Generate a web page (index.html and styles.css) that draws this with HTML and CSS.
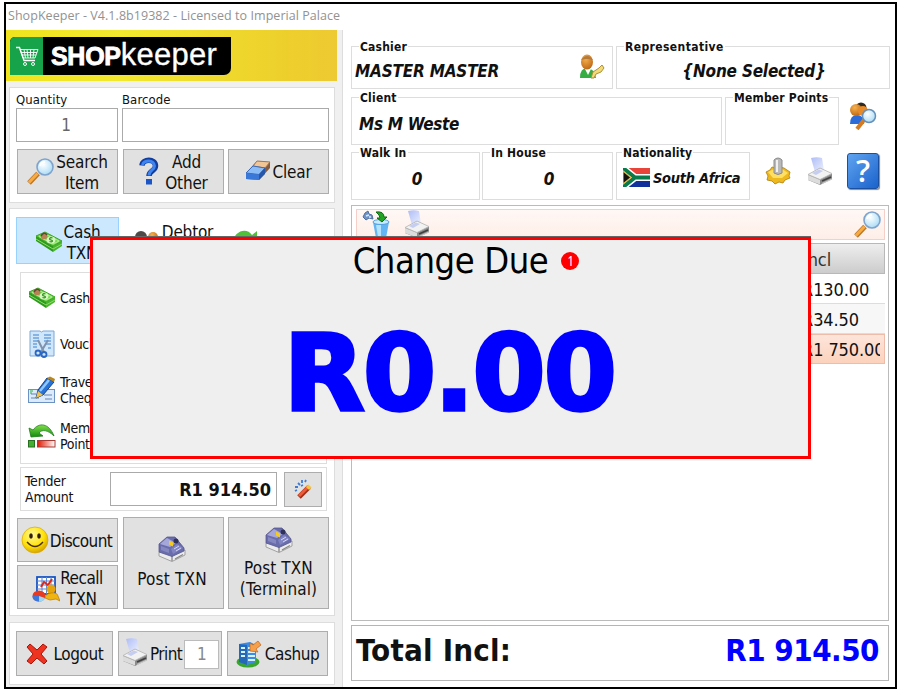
FILE: index.html
```html
<!DOCTYPE html>
<html lang="en">
<head>
  <meta charset="UTF-8">
  <title>ShopKeeper</title>
  <link rel="stylesheet" href="styles.css">
</head>
<body>

  <!-- shared icons -->
  <svg class="defs" width="0" height="0">
    <defs>
      <linearGradient id="gPaper" x1="0" y1="0" x2="1" y2="1"><stop offset="0" stop-color="#aebcf5"/><stop offset="1" stop-color="#eef2ff"/></linearGradient>
      <linearGradient id="gGreen" x1="0" y1="0" x2="0" y2="1"><stop offset="0" stop-color="#7fe04a"/><stop offset="1" stop-color="#138a10"/></linearGradient>
      <linearGradient id="gRed" x1="0" y1="0" x2="1" y2="0"><stop offset="0" stop-color="#e01800"/><stop offset="1" stop-color="#fff"/></linearGradient>
      <radialGradient id="gLens" cx=".4" cy=".35" r=".7"><stop offset="0" stop-color="#fff"/><stop offset="1" stop-color="#a5daf6"/></radialGradient>
      <radialGradient id="gHead" cx=".4" cy=".3" r=".8"><stop offset="0" stop-color="#f6b04c"/><stop offset="1" stop-color="#b8600e"/></radialGradient>
      <radialGradient id="gSmile" cx=".4" cy=".3" r=".75"><stop offset="0" stop-color="#fffa9a"/><stop offset=".6" stop-color="#ffe208"/><stop offset="1" stop-color="#d09a00"/></radialGradient>
    </defs>
    <symbol id="lens" viewBox="0 0 28 28">
      <path d="M2 26 11 16.500" stroke="#b8762c" stroke-width="5"/>
      <path d="M2 25.500 10.500 16.500" stroke="#f9ab42" stroke-width="3"/>
      <circle cx="18" cy="10" r="8" fill="url(#gLens)" stroke="#7fa3cc" stroke-width="1.600"/>
      <path d="M13 9a5 5 0 0 1 5-4" fill="none" stroke="#fff" stroke-width="2"/>
    </symbol>
    <symbol id="money" viewBox="0 0 28 22">
      <path d="M1 5 18 15v6L1 10Z" fill="#2c9a1c"/>
      <path d="M18 15 27 10v5l-9 6Z" fill="#49b52e"/>
      <path d="M1 8 18 18M18 18 27 13" stroke="#8fdc6a"/>
      <path d="M1 5 10 1 27 10 18 15Z" fill="#6bd346" stroke="#3ba527"/>
      <path d="M4 5.500 10 3 24 10 18 13Z" fill="none" stroke="#b5ef96"/>
      <ellipse cx="16" cy="9" rx="4.500" ry="3.500" fill="#d5f7bd"/>
      <path d="M17.500 7c-3-1-4 1.500-1.500 2s1.500 2.500-1.500 1.500" fill="none" stroke="#2d9020" stroke-width="1.200"/>
      <circle cx="9" cy="5" r="3.300" fill="#b98253"/>
      <path d="M6 5q3-5 6-1" stroke="#5b4a36" stroke-width="1.600" fill="none"/>
    </symbol>
    <symbol id="printer" viewBox="0 0 26 28">
      <path d="M4 1q6-1.500 11 0l2 13-9 1Z" fill="url(#gPaper)"/>
      <path d="M1 18 13 11 25 17v5l-12 6L1 23Z" fill="#8b8b8b"/>
      <path d="M1 17.500 13 11 25 16.500 13 22.500Z" fill="#f2f2f2" stroke="#b5b5b5" stroke-width=".8"/>
      <path d="M1 18v5l12 4.500V23Z" fill="#dcdcdc"/>
      <path d="M5 16 12 12.500 16 14 9 18Z" fill="#c5cdf0"/>
      <path d="M15 24 24 20" stroke="#404040" stroke-width="1.600"/>
      <path d="M15 26.500 25 22" stroke="#c8c8c8" stroke-width="1.200"/>
    </symbol>
    <symbol id="register" viewBox="0 0 28 26">
      <path d="M1 16v4l13 5.500L27 19v-5Z" fill="#ececec" stroke="#a0a0a0"/>
      <path d="M14 20v5M17 23l8-4.500" stroke="#888" stroke-width="1.300"/>
      <path d="M1 8 9 1 17 1 26 12 26 15 14 20.500 1 16Z" fill="#6a6dac" stroke="#55578d" stroke-width=".8"/>
      <path d="M2 8 9 2 18 7 12 11Z" fill="#a5a7da"/>
      <path d="M3 10 11 13 11 17 3 14Z" fill="#8588c0"/>
      <path d="M13 13 19 8 25 12 15 18Z" fill="#8184c2"/>
      <path d="M11 4.500 15 6.500 15 10.500 11 8.500Z" fill="#f6cc18"/>
      <circle cx="18" cy="5" r="2.500" fill="#2f3158"/>
      <path d="M16 13l5-3M18 15l5-3" stroke="#d5d6f2"/>
    </symbol>
  </svg>

  <div class="window">
    <div class="titlebar">ShopKeeper - V4.1.8b19382 - Licensed to Imperial Palace</div>

    <div class="main">
      <div class="left">
        <div class="banner">
          <div class="logo">
            <div class="logo-cart">
              <svg width="24" height="24" viewBox="0 0 24 24" fill="none" stroke="#fff">
                <path d="M1 2.500H4.500L9 15.500H20" stroke-width="1.400"/>
                <path d="M5 4.500H23L20 13H8ZM6 7.500H22M7 10H21M9 4.500l1.500 8.500M12 4.500l1 8.500M15.500 4.500V13M19 4.500l-1 8.500" stroke-width=".9"/>
                <circle cx="10" cy="19" r="1.500"/><circle cx="18" cy="19" r="1.500"/>
              </svg>
            </div>
            <div class="logo-text"><b>SHOP</b><span>keeper</span></div>
          </div>
        </div>

        <div class="panel entry">
          <div class="labels"><span>Quantity</span><span>Barcode</span></div>
          <div class="inputs"><div class="input">1</div><div class="input"></div></div>
          <div class="buttons">
            <div class="btn"><svg width="28" height="28"><use href="#lens"/></svg><span>Search<br>Item</span></div>
            <div class="btn add">
              <svg width="22" height="28" viewBox="0 0 22 28"><path d="M4 8.500C4.500 1.500 17.500 1.500 17.500 9 17.500 14 11 13.500 11 19" fill="none" stroke="#123d9c" stroke-width="5.500"/><path d="M4.500 8C5.500 2.500 16.500 2.500 16.500 9 16.500 13 11 13 11 18.500" fill="none" stroke="#3f85f2" stroke-width="3"/><rect x="8" y="22" width="6" height="5.500" fill="#1b55c8"/></svg>
              <span>Add<br>Other</span>
            </div>
            <div class="btn">
              <svg width="26" height="22" viewBox="0 0 26 22"><path d="M1 13 12 1 25 2v6L14 20 1 19Z" fill="#845b43"/><path d="M8 6 12 1 25 2 20 8Z" fill="#f2c596" stroke="#a57752"/><path d="M1 13 8 6 20 8 14 14.500Z" fill="#8cbcf5" stroke="#3d6bb8"/><path d="M1 13 14 14.500V20L1 19Z" fill="#3978d8"/><path d="M14 14.500 20 8v6l-6 6Z" fill="#2457ab"/></svg>
              <span>Clear</span>
            </div>
          </div>
        </div>

        <div class="panel payment">
          <div class="tabs">
            <div class="tab active"><svg width="28" height="22"><use href="#money"/></svg><span>Cash<br>TXN</span></div>
            <div class="tab debtor">
              <svg width="26" height="24" viewBox="0 0 26 24"><circle cx="7" cy="7" r="6" fill="#4f4a48"/><path d="M3 9q5-4 9 0-1 5-5 5T3 9" fill="#c8772c"/><circle cx="19" cy="7" r="5" fill="url(#gHead)"/><path d="M0 22q1-9 7-9t6 9M13 22q1-9 6-9t7 9" fill="#3f78cc"/></svg>
              <span>Debtor<br>TXN</span>
            </div>
            <div class="tab refund"><svg width="28" height="26" viewBox="0 0 28 26"><path d="M1 15C3 1 16-2 21 6L26 2V16H13L18 11C14 6 8 7 6 15Z" fill="#4fc03a"/></svg><span class="tick">.</span></div>
          </div>

          <div class="methods">
            <div class="method"><svg width="28" height="22"><use href="#money"/></svg><span>Cash</span></div>
            <div class="method">
              <svg width="28" height="28" viewBox="0 0 28 28"><path d="M2 1H12L13.500 2 15 1H26V26H2Z" fill="#cfe6fb" stroke="#7ba5d6"/><path d="M5 5h6M5 8h6M5 11h6M5 14h4M5 17h4M16 5h7M16 8h7M16 11h7M18 14h5M20 18h3" stroke="#6fa3e0" stroke-width="1.300"/><path d="M10 10 16 22M20 10 13 22" stroke="#8093ad" stroke-width="2"/><circle cx="10" cy="23" r="2.500" fill="none" stroke="#2a68c4" stroke-width="1.800"/><circle cx="16" cy="24.500" r="2.500" fill="none" stroke="#2a68c4" stroke-width="1.800"/></svg>
              <span>Voucher</span>
            </div>
            <div class="method">
              <svg width="28" height="28" viewBox="0 0 28 28"><rect x=".5" y="13.500" width="26" height="13" fill="#dcebfb" stroke="#6b92c2"/><path d="M3 18h5M3 22h8M16 19h8M17 23h7" stroke="#8aa8cc" stroke-width="1.300"/><path d="M2 15h3M2 17h2" stroke="#2fae40"/><path d="M8 22 10 14 19 2 26 6 15 19Z" fill="#2873d8" stroke="#1c427a"/><path d="M12 15 21 4" stroke="#8fc8ff" stroke-width="2.500"/><path d="M8 22 10 15 15 19Z" fill="#f1c34c"/><path d="M19 2 22 .500 27 3 26 6Z" fill="#b88720"/></svg>
              <span>Travellers<br>Cheque</span>
            </div>
            <div class="method">
              <svg width="28" height="26" viewBox="0 0 28 26"><path d="M3 14 1 5 5 7C11-1 21 0 26 13 20 7 14 6 11 10L15 13Z" fill="url(#gGreen)" stroke="#1c7a15" stroke-width=".8"/><rect x=".5" y="17.500" width="6" height="6.500" fill="#44ae31" stroke="#276f20"/><rect x="9.500" y="17.500" width="17.500" height="6.500" fill="url(#gRed)" stroke="#a83a34"/></svg>
              <span>Member<br>Points</span>
            </div>
          </div>

          <div class="tender">
            <span class="tender-label">Tender<br>Amount</span>
            <div class="tender-value">R1 914.50</div>
            <div class="btn wand"><svg width="18" height="20" viewBox="0 0 18 20"><path d="M5 18 15 8" stroke="#9c2f18" stroke-width="5"/><path d="M5 17 14 8" stroke="#f05a38" stroke-width="3"/><path d="M13.500 9.500 16 7" stroke="#f4c43c" stroke-width="4.500"/><path d="M1 12l2-1M1 8l3 0M4 4l2 2M8 1l0 3M11 3l1-2M7 7l2-1" stroke="#3c7cd8" stroke-width="1.800"/></svg></div>
          </div>

          <div class="actions">
            <div class="stack">
              <div class="btn discount">
                <svg width="28" height="28" viewBox="0 0 28 28"><circle cx="14" cy="14" r="13" fill="url(#gSmile)" stroke="#d8a800" stroke-width=".7"/><ellipse cx="10" cy="10" rx="1.800" ry="2.800" fill="#33200a"/><ellipse cx="18" cy="10" rx="1.800" ry="2.800" fill="#33200a"/><path d="M6 16q8 9 16 0" fill="none" stroke="#4a2c05" stroke-width="1.300"/></svg>
                <span>Discount</span>
              </div>
              <div class="btn recall">
                <svg width="28" height="26" viewBox="0 0 28 26"><rect x="5" y="1" width="18" height="17" fill="#fff" stroke="#1a55c0" stroke-width="1.800"/><path d="M5 5h18M5 9h18M5 13h18M10 1v17M14.500 1v17M19 1v17" stroke="#5888da"/><path d="M9 11 12 6 16 9 20 3" fill="none" stroke="#e02818" stroke-width="2"/><ellipse cx="7" cy="20" rx="6.500" ry="5.500" fill="#e83a20"/><path d="M7 20V25.500Q0 25 .5 20Z" fill="#3d76dc"/><path d="M7 20 13 22Q11 26 7 25.500Z" fill="#9ad8f4"/><circle cx="19" cy="13" r="4.500" fill="#e6a50c"/><path d="M13 22q0-4 6-5t7 3l2 5-4-2-6 1Z" fill="#f0b412" stroke="#b87a00" stroke-width=".7"/></svg>
                <span>Recall<br>TXN</span>
              </div>
            </div>
            <div class="btn tall"><svg width="28" height="26"><use href="#register"/></svg><span>Post TXN</span></div>
            <div class="btn tall terminal"><svg width="28" height="26"><use href="#register"/></svg><span>Post TXN<br>(Terminal)</span></div>
          </div>
        </div>

        <div class="panel footer">
          <div class="btn logout"><svg width="22" height="22" viewBox="0 0 22 22"><path d="M4 1 11 7 17 1 21 4 15 11 21 18 18 21 11 15 5 21 1 18 7 11 1 4Z" fill="#ee3420" stroke="#a81408"/></svg><span>Logout</span></div>
          <div class="btn print"><svg width="26" height="28"><use href="#printer"/></svg><span>Print</span><div class="copies">1</div></div>
          <div class="btn cashup"><svg width="26" height="28" viewBox="0 0 26 28"><ellipse cx="12" cy="22" rx="11.500" ry="5.500" fill="#38a52d"/><path d="M3 4 14 2 20 5V22L11 25 3 22Z" fill="#3a8ce6"/><path d="M3 4 11 5V25L3 22Z" fill="#2468b8"/><path d="M12 8h7M12 12h7M12 16h7M12 20h7M5 8h4M5 12h4M5 16h4" stroke="#d8f1ff" stroke-width="2.200"/><path d="M14 11V3l3 2 5-4 3 4-5 4 2 3Z" fill="#f6a04c" stroke="#bd6518" stroke-width=".7"/></svg><span>Cashup</span></div>
        </div>
      </div>

      <div class="right">
        <div class="row row1">
          <fieldset class="cashier"><legend>Cashier</legend><span>MASTER MASTER</span>
            <svg width="26" height="26" viewBox="0 0 26 26"><path d="M1 24Q1 14 8 14T17 24Z" fill="#35ad42"/><path d="M6 15l3 6 3-6Z" fill="#fff"/><ellipse cx="8" cy="8" rx="6" ry="7.500" fill="url(#gHead)"/><path d="M2 6q6-8 12 0-6-2-12 0" fill="#b5793a"/><path d="M12 24 14 18 20 14 23 11 25 14 22 18 17 20 15 24Z" fill="#f2da78" stroke="#ae9035"/></svg>
          </fieldset>
          <fieldset class="rep"><legend>Representative</legend><span>{None Selected}</span></fieldset>
        </div>
        <div class="row row2">
          <fieldset class="client"><legend>Client</legend><span>Ms M Weste</span></fieldset>
          <fieldset class="points"><legend>Member Points</legend></fieldset>
          <svg class="find-client" width="28" height="28" viewBox="0 0 28 28"><circle cx="12" cy="6" r="5.500" fill="#2d2925"/><path d="M1 22Q1 13 8 13t7 9Z" fill="#2c6bd8"/><circle cx="7" cy="8" r="6" fill="url(#gHead)"/><circle cx="14" cy="9" r="5" fill="#e78a2a"/><path d="M8 27 15 18" stroke="#d27b22" stroke-width="4"/><circle cx="20" cy="14" r="6.500" fill="url(#gLens)" stroke="#648fb9" stroke-width="1.500"/></svg>
        </div>
        <div class="row row3">
          <fieldset class="walkin"><legend>Walk In</legend><span>0</span></fieldset>
          <fieldset class="inhouse"><legend>In House</legend><span>0</span></fieldset>
          <fieldset class="nation"><legend>Nationality</legend>
            <svg width="27" height="19" viewBox="0 0 27 19"><path fill="#e8443a" d="M0 0h27v9H0z"/><path fill="#10309c" d="M0 10h27v9H0z"/><path d="M0 0 12 9.500H27M0 19 12 9.500" fill="none" stroke="#fff" stroke-width="7"/><path d="M0 0 12 9.500H27M0 19 12 9.500" fill="none" stroke="#0a7a4a" stroke-width="4"/><path d="M0 3 8 9.500 0 16Z" fill="#111" stroke="#e8b53a" stroke-width="1.200"/></svg>
            <span>South Africa</span>
          </fieldset>
          <svg class="gear" width="26" height="28" viewBox="0 0 26 28"><path d="M1 15 5 13 7 10 11 11 15 10 19 11 22 13 25 15 24 19 25 21 20 23 18 26 14 25 10 27 7 24 2 23 3 19Z" fill="#eeb91e" stroke="#af7c08" stroke-width=".8"/><path d="M3 15 9 12 17 12 23 16 17 21 8 21Z" fill="#ffdf62"/><path d="M9 3Q13-1 17 3V16Q13 19 9 16Z" fill="#b9b9b9" stroke="#8a8a8a"/><path d="M12 3V15" stroke="#f0f0f0" stroke-width="2"/></svg>
          <svg class="doc-print" width="26" height="28"><use href="#printer"/></svg>
          <div class="help">?</div>
        </div>

        <div class="list">
          <div class="toolbar">
            <svg width="28" height="28" viewBox="0 0 28 28"><path d="M11 12H27L24 28H14Z" fill="#62b5f2"/><ellipse cx="19" cy="12" rx="8" ry="2.500" fill="#c6eaff" stroke="#54a0db"/><path d="M14 15l2 12h3V15Z" fill="#b5e2ff"/><path d="M1 7 3 3 6 1 7 4 10 5 11 9 7 8 4 10Z" fill="#6e93c8" stroke="#4e6fa0"/><path d="M4 6l3-1M7 7l2 0" stroke="#dbe8f8" stroke-width="1.500"/><path d="M14 2Q22 1 22 7H25L20 12 15 8H18Q18 5 14 2Z" fill="#22a321" stroke="#126b15"/></svg>
            <svg width="26" height="28"><use href="#printer"/></svg>
            <svg class="search" width="28" height="28"><use href="#lens"/></svg>
          </div>
          <div class="grid">
            <div class="grid-head"><span>Incl</span></div>
            <div class="grid-row"><span>R130.00</span></div>
            <div class="grid-row alt"><span>R34.50</span></div>
            <div class="grid-row selected"><span>R1 750.00</span></div>
          </div>
        </div>

        <div class="total"><span>Total Incl:</span><span class="amount">R1 914.50</span></div>
      </div>
    </div>

    <div class="dialog">
      <div class="dialog-title">Change Due <span class="badge">1</span></div>
      <div class="dialog-amount">R0.00</div>
    </div>
  </div>

</body>
</html>
```

FILE: styles.css
```css
* { box-sizing: border-box; margin: 0; padding: 0; }
body {
  background: #fff;
  font-family: 'DejaVu Sans Condensed', 'DejaVu Sans', sans-serif;
  font-stretch: condensed;
  color: #111;
  overflow: hidden;
}
.defs { position: absolute; }
svg { flex: none; display: block; }
.window {
  position: relative;
  width: 893px;
  height: 687px;
  margin: 2px 0 0 4px;
  border: 2px solid #000;
  background: #fff;
}
.titlebar {
  height: 26px;
  padding-left: 2px;
  line-height: 23px;
  font-family: 'Open Sans', sans-serif;
  font-stretch: normal;
  font-size: 12.5px;
  letter-spacing: 0.05px;
  color: #929292;
  white-space: nowrap;
}
.main { display: flex; height: 657px; }

/* left side */
.left {
  width: 337px;
  background: #f0f0f0;
  border-right: 1px solid #ddd;
}
.banner {
  width: 331px;
  height: 51px;
  padding: 7px 0 0 4px;
  background: linear-gradient(90deg, #f0e31e, #f3e82e 35%, #edcf2c 85%, #edca32);
}
.logo {
  display: flex;
  width: 221px;
  height: 38px;
  background: #000;
  border-radius: 5px 0 7px 0;
  overflow: hidden;
}
.logo-cart {
  width: 33px;
  padding: 8px 0 0 5px;
  background: #16a34a;
}
.logo-text {
  display: flex;
  padding-left: 8px;
  color: #fff;
  font-family: 'Liberation Sans', sans-serif;
}
.logo-text b { letter-spacing: -0.3px; font-size: 25px; line-height: 38px; -webkit-text-stroke: 0.9px #fff; }
.logo-text span { font-size: 31px; line-height: 35px; letter-spacing: 0.3px; -webkit-text-stroke: 0.3px #fff; }

.panel {
  width: 326px;
  margin-left: 3px;
  background: #fff;
  border: 1px solid #ddd;
}
.entry { height: 116px; margin-top: 6px; padding: 4px 5px 0 6px; }
.labels { display: grid; grid-template-columns: 106px 1fr; font-size: 13px; line-height: 16px; height: 16px; letter-spacing: 0.1px; }
.inputs { display: grid; grid-template-columns: 102px 207px; gap: 4px; }
.input {
  height: 34px;
  border: 1px solid #aaa;
  background: #fff;
  text-align: center;
  line-height: 32px;
  font-size: 17px;
  color: #666;
}
.input:first-child { padding-right: 2px; }
.buttons { display: grid; grid-template-columns: 101px 101px 101px; gap: 4.5px; margin-top: 7px; padding-left: 1px; }
.btn {
  display: flex;
  align-items: center;
  justify-content: center;
  gap: 1px;
  height: 45px;
  background: #e1e1e1;
  border: 1px solid #adadad;
  font-size: 17px;
  line-height: 21px;
  letter-spacing: -0.2px;
  text-align: center;
  white-space: nowrap;
}
.entry .btn { padding-top: 2px; }
.entry .btn svg { margin-top: -3px; }
.entry .add { gap: 5px; padding-right: 0; }

.payment { height: 408px; margin-top: 5px; padding: 8px 0 0 6px; }
.tabs { display: flex; height: 47px; }
.tab {
  display: flex;
  align-items: center;
  justify-content: center;
  width: 103px;
  padding-top: 5px;
  gap: 1px;
  font-size: 17px;
  line-height: 21px;
  letter-spacing: -0.2px;
  text-align: center;
}
.tab svg { margin-top: -3px; }
.tab.active { background: #cce8ff; border: 1px solid #99d1ff; padding-top: 5px; }
.debtor { padding-left: 6px; gap: 2px; }
.refund { justify-content: flex-start; padding-left: 9px; gap: 61px; }
.tick { margin-top: -16px; }
.methods {
  width: 307px;
  height: 192px;
  margin: 8px 0 0 4px;
  padding: 2px 0 0 7px;
  border: 1px solid #ddd;
}
.method {
  display: flex;
  align-items: center;
  gap: 4px;
  height: 46px;
  font-size: 14px;
  line-height: 16px;
  letter-spacing: -0.3px;
}
.tender {
  display: flex;
  align-items: center;
  width: 307px;
  height: 44px;
  margin: 3px 0 0 4px;
  padding-left: 4px;
  border: 1px solid #ddd;
}
.tender-label { width: 85px; font-size: 14px; line-height: 16px; letter-spacing: -0.2px; }
.tender-value {
  width: 167px;
  height: 34px;
  padding-right: 5px;
  border: 1px solid #aaa;
  text-align: right;
  font-weight: bold;
  font-size: 18px;
  line-height: 33px;
}
.tender .wand { width: 38px; height: 35px; margin-left: 7px; }
.actions { display: grid; grid-template-columns: 101px 101px 101px; gap: 4.5px; margin: 6px 0 0 1px; }
.stack { display: grid; gap: 3px; padding-top: 1px; }
.stack .btn { height: 44px; }
.stack .discount { gap: 1px; padding: 2px 2px 0 0; letter-spacing: -0.6px; }
.discount svg { margin-top: -2px; }
.recall { gap: 0; padding-top: 3px; letter-spacing: -0.5px; }
.btn.tall { flex-direction: column; height: 92px; padding-right: 2px; gap: 7px; letter-spacing: 0.2px; }
.btn.tall.terminal { gap: 5px; padding-right: 0; letter-spacing: 0.1px; }

.footer { display: flex; height: 63px; margin-top: 6px; padding: 8px 0 0 6px; }
.footer .btn { height: 45px; padding-top: 1px; letter-spacing: -0.4px; }
.footer .logout { width: 97px; gap: 6px; }
.footer .print { width: 104px; margin-left: 5px; gap: 2px; justify-content: flex-start; padding-left: 3px; }
.footer .print span { letter-spacing: -0.6px; }
.print svg { margin-top: -4px; }
.footer .cashup { width: 101px; margin-left: 5px; gap: 3px; }
.copies {
  width: 35px;
  height: 29px;
  border: 1px solid #bbb;
  background: #fff;
  color: #888;
  line-height: 27px;
}

/* right side */
.right { width: 552px; padding: 9px 0 0 8px; }
.row { display: flex; }
fieldset {
  display: flex;
  border: 1px solid #ddd;
  white-space: nowrap;
  font-size: 17px;
  font-weight: bold;
  font-style: italic;
  line-height: 20px;
}
legend {
  height: 15px;
  margin-left: 7px;
  padding: 0 1px;
  font-size: 12px;
  font-style: normal;
  line-height: 16px;
  letter-spacing: 0.2px;
}
.row1 fieldset { height: 50px; }
.row2 { height: 55px; margin-top: 1px; }
.row2 fieldset { height: 55px; }
.row3 { height: 55px; }
.row3 fieldset { height: 55px; }
.cashier { width: 262px; padding: 7px 7px 0 3px; justify-content: space-between; letter-spacing: -0.2px; }
.cashier legend { margin-left: 4px; }
.cashier svg { margin-top: -7px; }
.rep { width: 274px; margin-left: 3px; padding: 7px 0 0 2px; justify-content: center; letter-spacing: -0.2px; }
.rep legend { margin-left: 5px; letter-spacing: 0.4px; }
.client { width: 371px; padding: 9px 0 0 7px; letter-spacing: -0.3px; }
.client legend { margin-left: 0; }
.points { width: 114px; margin-left: 3px; }
.find-client { margin: 12px 0 0 10px; }
.walkin { width: 129px; padding: 9px 0 0 3px; justify-content: center; }
.walkin legend { margin-left: 4px; }
.inhouse { width: 131px; margin-left: 2px; padding: 9px 0 0 3px; justify-content: center; }
.inhouse legend { margin-left: 4px; }
.nation { width: 134px; margin-left: 3px; padding: 8px 0 0 6px; gap: 3px; }
.nation legend { margin-left: -1px; }
.nation span { font-size: 14.5px; letter-spacing: -0.3px; }
.gear { margin: 12px 0 0 15px; }
.doc-print { margin: 12px 0 0 16px; }
.help {
  width: 32px;
  height: 36px;
  margin: 8px 0 0 14px;
  border: 1px solid #1b4fa0;
  border-radius: 3px;
  background: linear-gradient(135deg, #5fa4f0, #1b62cc);
  box-shadow: 1px 1px 1px #888;
  color: #fff;
  font-family: 'Open Sans', sans-serif;
  font-stretch: normal;
  font-weight: 600;
  font-size: 31px;
  line-height: 33px;
  text-align: center;
}
.list {
  width: 538px;
  height: 416px;
  margin-top: 5px;
  padding: 3px 3px 0 4px;
  border: 1px solid #bbb;
}
.toolbar {
  display: flex;
  height: 31px;
  gap: 14px;
  padding-left: 5px;
  border: 1px solid #f6d0c8;
  background: linear-gradient(#fff8f5, #feeee8);
}
.toolbar .search { margin: 0 2px 0 auto; }
.grid { margin-top: 3px; font-size: 18px; letter-spacing: -0.1px; }
.grid-head, .grid-row {
  display: flex;
  height: 30px;
  padding-left: 446px;
  line-height: 31px;
  border-bottom: 1px solid #ddd;
  overflow: hidden;
  white-space: nowrap;
}
.grid-head { height: 31px; border: 1px solid #b8b8b8; background: linear-gradient(#eee, #ccc); color: #333; }
.alt { background: #f7f7f7; }
.grid-row span { width: 78px; overflow: hidden; }
.selected { background: linear-gradient(#fde5da, #fcd2bd); border: 1px solid #eebca8; line-height: 29px; }
.grid .selected { padding-left: 445px; }
.total {
  display: flex;
  justify-content: space-between;
  width: 538px;
  height: 56px;
  margin-top: 4px;
  padding: 0 9px 0 4px;
  border: 1px solid #b5b5b5;
  font-size: 31px;
  font-weight: bold;
  line-height: 48px;
  letter-spacing: 0.2px;
}
.amount { color: #00f; letter-spacing: -0.5px; }

/* change popup */
.dialog {
  position: absolute;
  left: 84px;
  top: 233px;
  width: 721px;
  height: 222px;
  border: 3px solid #f00;
  background: #efefef;
  box-shadow: 0 -1px 0 #666;
}
.dialog-title {
  display: flex;
  align-items: center;
  justify-content: center;
  gap: 13px;
  height: 40px;
  padding-left: 31px;
  font-size: 36px;
  letter-spacing: -0.4px;
  color: #000;
}
.badge {
  width: 18px;
  height: 18px;
  margin-top: 2px;
  border-radius: 50%;
  background: #f00;
  color: #fff;
  font-family: 'Open Sans', sans-serif;
  font-size: 14px;
  line-height: 18px;
  letter-spacing: 0;
  text-align: center;
}
.dialog-amount {
  margin-top: 30px;
  padding-right: 2px;
  text-align: center;
  color: #00f;
  font-family: 'DejaVu Sans', sans-serif;
  font-stretch: normal;
  font-weight: bold;
  font-size: 105px;
  line-height: 128px;
  letter-spacing: -1.7px;
  -webkit-text-stroke: 3.6px #00f;
}
```
